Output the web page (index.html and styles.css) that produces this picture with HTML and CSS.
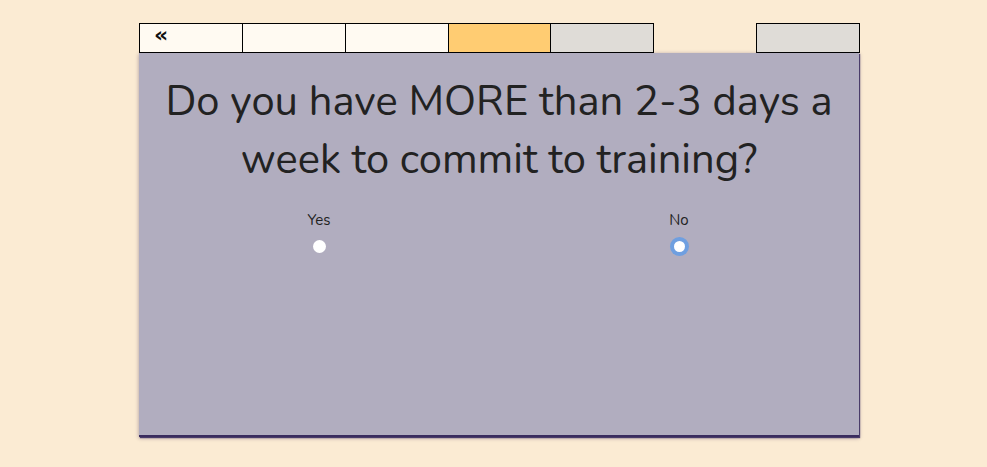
FILE: index.html
```html
<!DOCTYPE html>
<html>
<head>
<meta charset="utf-8">
<link rel="stylesheet" href="styles.css">
</head>
<body>
<div class="wrap">
  <div class="tabs">
    <div class="tab tab-cream tab-back">«</div>
    <div class="tab tab-cream"></div>
    <div class="tab tab-cream"></div>
    <div class="tab tab-active"></div>
    <div class="tab tab-grey"></div>
    <div class="tab-empty"></div>
    <div class="tab tab-grey"></div>
  </div>
  <div class="card">
    <h1 class="question">Do you have MORE than 2-3 days a week to commit to training?</h1>
    <div class="options">
      <label class="option">
        <span class="option-label">Yes</span>
        <input type="radio" name="q" class="radio">
      </label>
      <label class="option">
        <span class="option-label">No</span>
        <input type="radio" name="q" class="radio radio-focus">
      </label>
    </div>
  </div>
</div>
</body>
</html>
```

FILE: styles.css
```css
html, body {
  margin: 0;
  padding: 0;
  background: #fbebd3;
  font-family: "Nunito", "Lato", "Open Sans", sans-serif;
  color: #222;
}
body {
  min-height: 467px;
}
.wrap {
  width: 720px;
  margin-left: 139px;
  padding-top: 23px;
  padding-bottom: 30px;
}
.tabs {
  display: grid;
  grid-template-columns: repeat(7, 1fr);
  height: 30px;
}
.tab {
  border: 1px solid #000;
  margin-right: -1px;
  box-sizing: border-box;
}
.tab-back {
  font-weight: bold;
  font-size: 22px;
  line-height: 22px;
  padding-left: 14px;
  font-family: "DejaVu Sans", sans-serif;
  color: #111;
}
.tab-cream { background: #fffaf2; }
.tab-active { background: #ffcc72; }
.tab-grey { background: #dfdcd7; }
.card {
  background: #b1adbf;
  height: 382px;
  border-bottom: 2px solid #3a2c5e;
  box-shadow: 1px 1px 1px #4a3c6a, 0 1px 4px rgba(40, 20, 70, 0.4);
}
.question {
  margin: 0;
  padding: 20px 10px 0;
  text-align: center;
  font-weight: normal;
  font-size: 41.7px;
  line-height: 58px;
  color: #222;
}
.options {
  display: grid;
  grid-template-columns: 1fr 1fr;
  margin-top: 22px;
}
.option {
  display: flex;
  flex-direction: column;
  align-items: center;
  gap: 11px;
}
.option-label {
  font-size: 15px;
  line-height: 18px;
}
.radio {
  appearance: none;
  -webkit-appearance: none;
  margin: 0;
  width: 13px;
  height: 13px;
  border-radius: 50%;
  background: #fff;
}
.radio-focus {
  width: 11px;
  height: 11px;
  margin-top: 1px;
  box-shadow: 0 0 0 4px #6f9fe0;
}
```
